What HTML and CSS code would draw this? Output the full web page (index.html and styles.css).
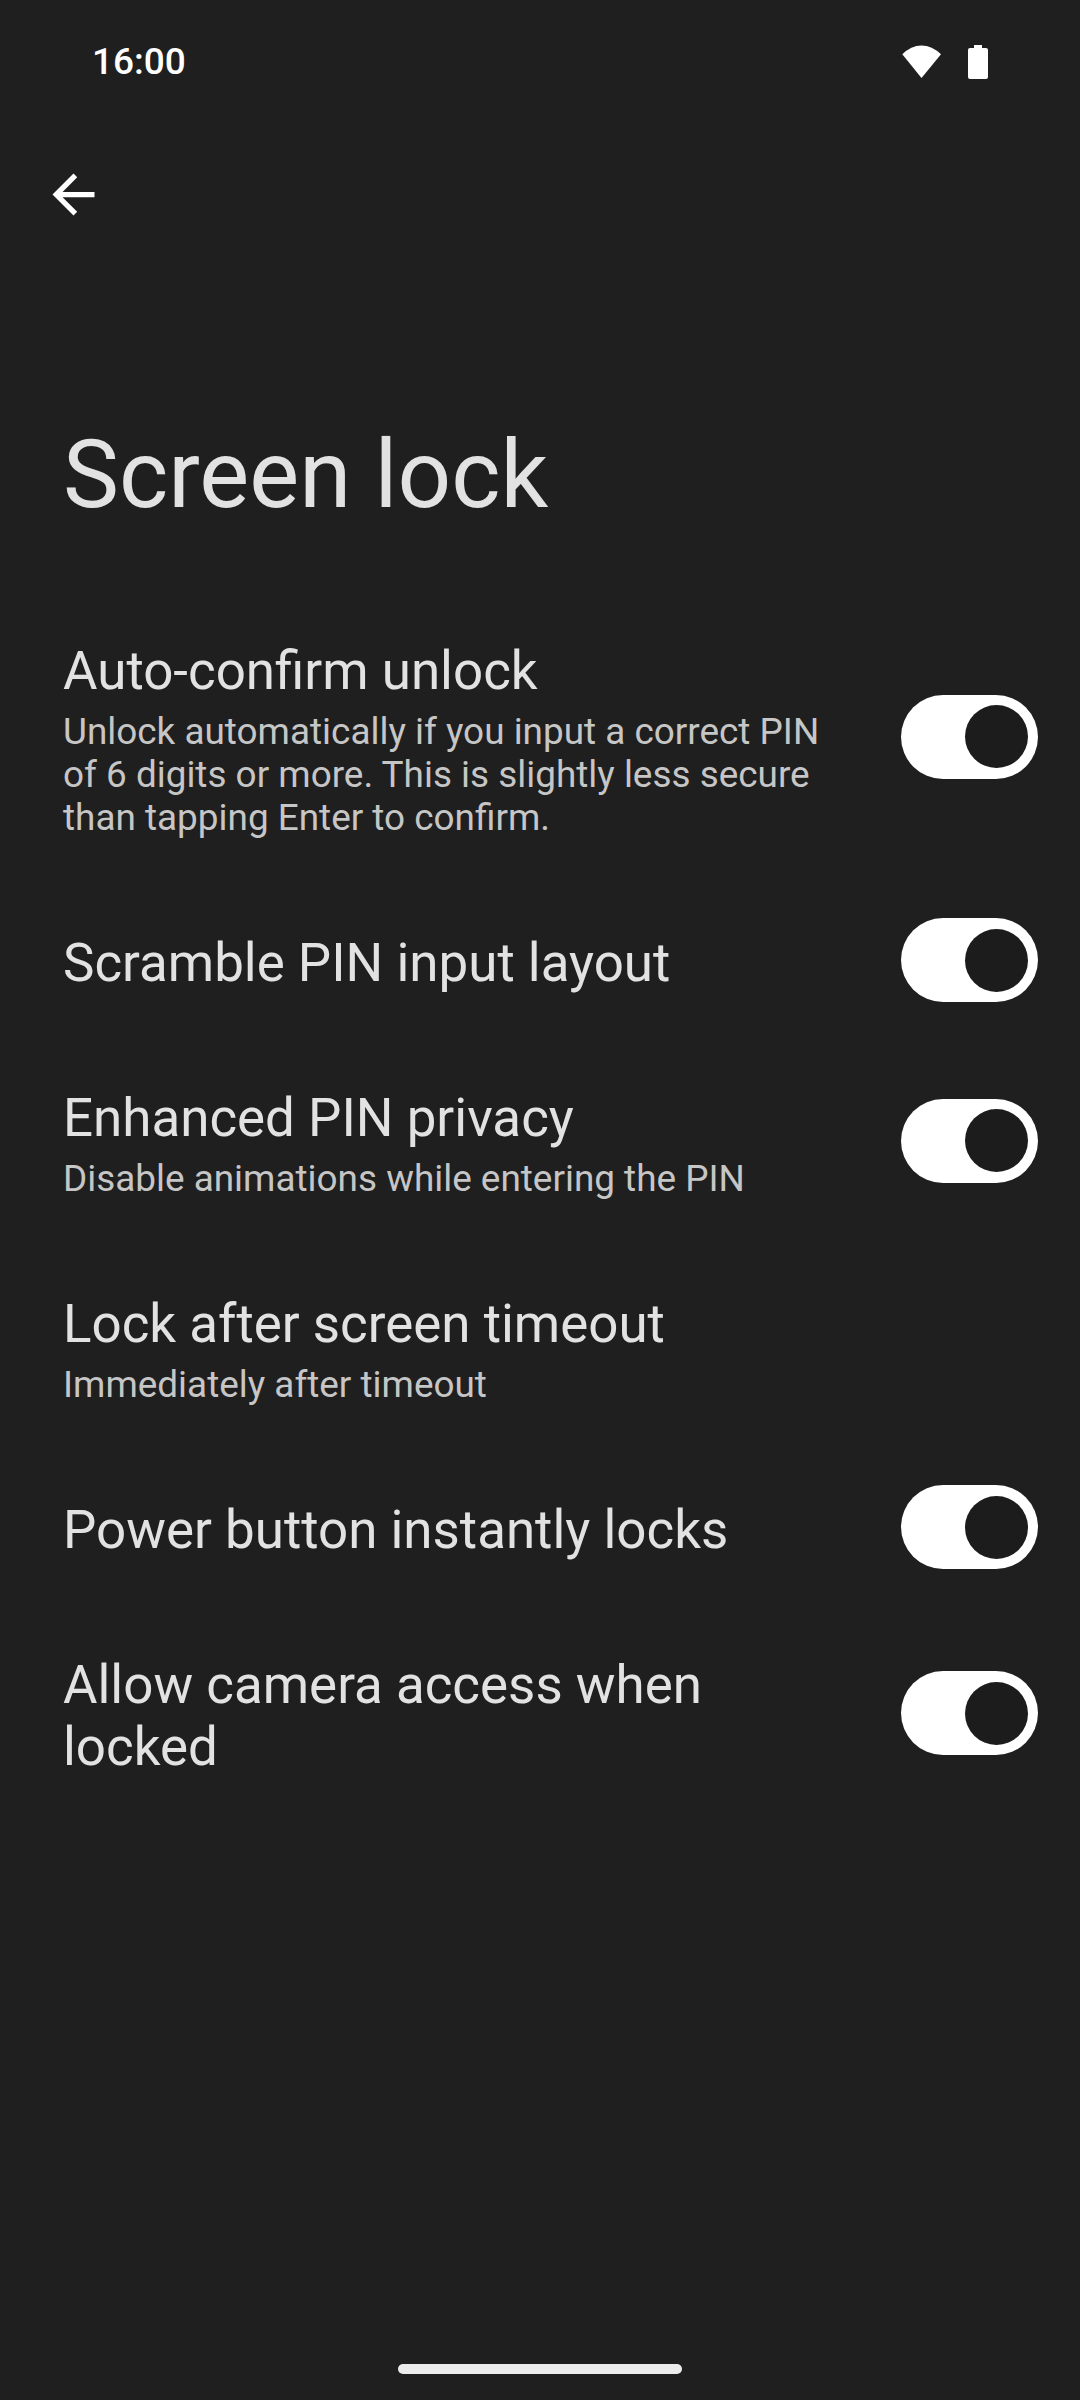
FILE: index.html
```html
<!DOCTYPE html>
<html lang="en">
<head>
<meta charset="utf-8">
<title>Screen lock</title>
<link rel="stylesheet" href="styles.css">
</head>
<body>
<div class="screen">
  <header class="status">
    <span class="clock">16:00</span>
    <div class="status-icons">
      <svg class="wifi" viewBox="0 0 40 34"><path d="M19.5 33 0.3 9.3Q9 0.4 19.5 0.4T39 9.3Z"/></svg>
      <svg class="battery" viewBox="0 0 20 34"><path d="M6 0h8v3h4a2 2 0 0 1 2 2v27a2 2 0 0 1-2 2H2a2 2 0 0 1-2-2V5a2 2 0 0 1 2-2h4z"/></svg>
    </div>
  </header>
  <nav class="toolbar">
    <svg class="back" viewBox="0 0 24 24"><path d="M20 11H7.83l5.59-5.59L12 4l-8 8 8 8 1.41-1.41L7.83 13H20z"/></svg>
  </nav>
  <h1 class="heading">Screen lock</h1>
  <main class="list">
    <section class="row">
      <div class="text">
        <div class="title">Auto-confirm unlock</div>
        <div class="summary">Unlock automatically if you input a correct PIN<br>of 6 digits or more. This is slightly less secure<br>than tapping Enter to confirm.</div>
      </div>
      <div class="switch"><div class="thumb"></div></div>
    </section>
    <section class="row">
      <div class="text"><div class="title">Scramble PIN input layout</div></div>
      <div class="switch"><div class="thumb"></div></div>
    </section>
    <section class="row">
      <div class="text">
        <div class="title">Enhanced PIN privacy</div>
        <div class="summary">Disable animations while entering the PIN</div>
      </div>
      <div class="switch"><div class="thumb"></div></div>
    </section>
    <section class="row">
      <div class="text">
        <div class="title">Lock after screen timeout</div>
        <div class="summary">Immediately after timeout</div>
      </div>
    </section>
    <section class="row">
      <div class="text"><div class="title">Power button instantly locks</div></div>
      <div class="switch"><div class="thumb"></div></div>
    </section>
    <section class="row">
      <div class="text"><div class="title">Allow camera access when<br>locked</div></div>
      <div class="switch"><div class="thumb"></div></div>
    </section>
  </main>
  <footer class="gesture"><div class="handle"></div></footer>
</div>
</body>
</html>
```
FILE: styles.css
```css
body {
  margin: 0;
  background: #1f1f1f;
  font-family: Roboto, sans-serif;
  color: #e2e2e2;
}
.screen {
  display: flex;
  flex-direction: column;
  width: 1080px;
  height: 2400px;
}
.status {
  display: flex;
  justify-content: space-between;
  height: 121px;
  padding: 0 92px;
}
.clock {
  margin-top: 40px;
  font-size: 37px;
  line-height: 43px;
  font-weight: 500;
  color: #fff;
}
.status-icons {
  display: flex;
  gap: 26px;
  margin-top: 45px;
}
.status-icons svg {
  height: 34px;
  fill: #fff;
}
.wifi { width: 40px; }
.battery { width: 20px; }
.toolbar {
  height: 147px;
  padding: 42px 42px 0;
}
.back {
  display: block;
  width: 63px;
  height: 63px;
  fill: #fff;
}
.heading {
  margin: 0;
  height: 171px;
  padding: 110px 63px 0;
  font-size: 94.2px;
  line-height: 110px;
  font-weight: 400;
  white-space: nowrap;
}
.list {
  display: flex;
  flex-direction: column;
}
.row {
  display: flex;
  align-items: center;
  justify-content: space-between;
  padding: 0 42px 0 63px;
}
.text {
  padding: 49px 0 44px;
  white-space: nowrap;
}
.title {
  font-size: 52.9px;
  line-height: 62px;
}
.summary {
  margin-top: 8px;
  font-size: 36.9px;
  line-height: 43px;
  color: #c6c6c6;
}
.switch {
  display: flex;
  align-items: center;
  justify-content: flex-end;
  box-sizing: border-box;
  width: 137px;
  height: 84px;
  margin-bottom: 0.5px;
  padding-right: 10.5px;
  border-radius: 42px;
  background: #fff;
}
.thumb {
  width: 63px;
  height: 63px;
  border-radius: 50%;
  background: #1c1c1c;
}
.gesture {
  display: flex;
  justify-content: center;
  margin-top: auto;
  padding-bottom: 26px;
}
.handle {
  width: 284px;
  height: 10px;
  border-radius: 5px;
  background: #ececec;
}
```
